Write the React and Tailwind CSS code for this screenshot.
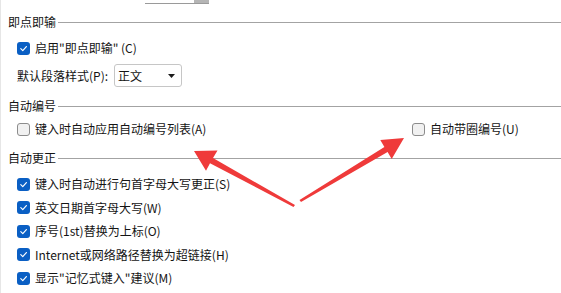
const font = { fontFamily: '"Noto Sans CJK SC", "Noto Sans", sans-serif' };

function Box({ checked }) {
  if (checked) {
    return (
      <span className="flex h-[13px] w-[13px] shrink-0 items-center justify-center rounded-[3px] bg-[#0a5fc4]">
        <svg width="9" height="9" viewBox="0 0 10 10" fill="none">
          <path d="M2 5.2 4.2 7.3 8.2 2.8" stroke="white" strokeWidth="1.3" strokeLinecap="round" strokeLinejoin="round" />
        </svg>
      </span>
    );
  }
  return <span className="h-[13px] w-[13px] shrink-0 rounded-[3px] border border-[#8c8c8c] bg-[#f1f1f1]" />;
}

function Check({ checked, label, className = "" }) {
  return (
    <div className={`flex h-[20px] items-center gap-[5px] ${className}`}>
      <Box checked={checked} />
      <span className="text-[12px] leading-none text-[#141414]">{label}</span>
    </div>
  );
}

function Heading({ title, className = "" }) {
  return (
    <div className={`flex h-[20px] items-center pl-[7px] ${className}`}>
      <span className="text-[12px] leading-none text-[#141414]">{title}</span>
      <div className="ml-[2px] h-px flex-1 bg-[#a3a3a3]" />
    </div>
  );
}

const CORRECT = [
  "键入时自动进行句首字母大写更正(S)",
  "英文日期首字母大写(W)",
  "序号(1st)替换为上标(O)",
  "Internet或网络路径替换为超链接(H)",
  '显示"记忆式键入"建议(M)',
];

export default function App() {
  return (
    <div className="relative h-[293px] w-[561px] overflow-hidden border-l border-[#e6e6e6] bg-white" style={font}>
      {/* bottom edge of the control above */}
      <div className="ml-[144px] flex h-[4px] w-[64px] border-b border-[#9a9a9a]">
        <div className="flex-1" />
        <div className="w-[15px] bg-[#b5b5b5]" />
      </div>

      <Heading title="即点即输" className="mt-[8px]" />
      <Check checked label={'启用"即点即输" (C)'} className="mt-[6px] pl-[16px]" />

      <div className="mt-[6px] flex items-center pl-[16px]">
        <span className="w-[97px] text-[12px] leading-none text-[#141414]">默认段落样式(P):</span>
        <div className="flex h-[23px] w-[68px] items-center justify-between rounded-[3px] border border-[#c6c6c6] bg-white pl-[3px] pr-[6px]">
          <span className="text-[12px] leading-none text-[#141414]">正文</span>
          <svg width="7" height="4" viewBox="0 0 7 4">
            <path d="M0 0h7L3.5 4z" fill="#1b1b1b" />
          </svg>
        </div>
      </div>

      <Heading title="自动编号" className="mt-[9px]" />
      <div className="mt-[3px] flex pl-[16px]">
        <Check label="键入时自动应用自动编号列表(A)" className="w-[395px]" />
        <Check label="自动带圈编号(U)" />
      </div>

      <Heading title="自动更正" className="mt-[9px]" />
      <div className="mt-[6px] flex flex-col gap-[3.5px] pl-[16px]">
        {CORRECT.map((t) => (
          <Check key={t} checked label={t} />
        ))}
      </div>

      <svg className="pointer-events-none absolute left-0 top-0" width="561" height="293">
        <polygon
          points="193,151 216.5,150.5 212,158 294,205 292.5,207 209,163.2 205,170.7"
          fill="#ef3a3a"
        />
        <polygon
          points="403,138 390.7,158.9 386.6,152.1 300,202 298.5,200 383.4,146.9 379.3,140.1"
          fill="#ef3a3a"
        />
      </svg>
    </div>
  );
}
